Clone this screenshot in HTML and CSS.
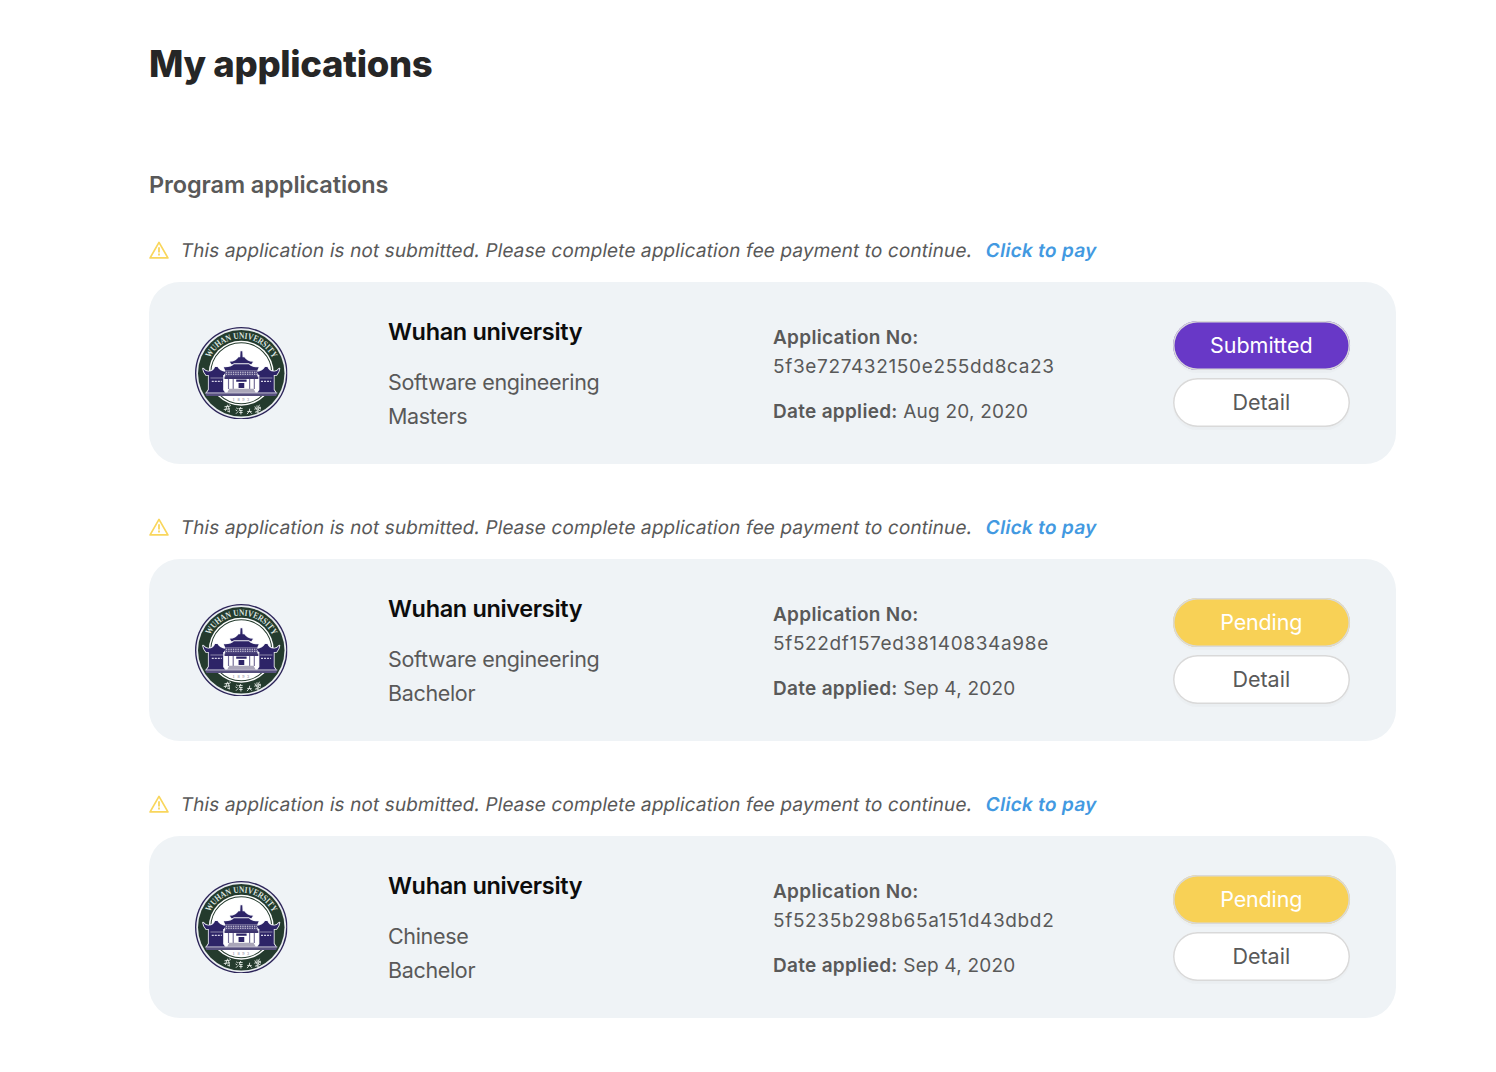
FILE: index.html
```html
<!DOCTYPE html>
<html lang="en">
<head>
<meta charset="utf-8">
<title>My applications</title>
<link rel="stylesheet" href="styles.css">
</head>
<body>
<svg class="defs" width="0" height="0" aria-hidden="true">
  <symbol id="warning" viewBox="0 0 20 18">
    <path d="M10 1.400 18.900 16.900H1.100Z" fill="none" stroke="#f9d65c" stroke-width="1.700" stroke-linejoin="round"/>
    <path d="M10 6.200v5.200M10 12.600v2" fill="none" stroke="#f9d65c" stroke-width="1.800"/>
  </symbol>
  <symbol id="emblem" viewBox="-138 -138 276 276">
    <circle r="138" fill="#2b2358"/>
    <circle r="134" fill="#e9edf0"/>
    <circle r="129" fill="#243b2d"/>
    <circle r="97" fill="#fff"/>
    <circle r="91" fill="none" stroke="#243b2d" stroke-width="3"/>
    <path d="M-92 8H92V66H-92Z" fill="#fff"/>
    <g fill="#2d2467" stroke="#f3f4f8" stroke-width="5" paint-order="stroke" stroke-linejoin="round">
      <path d="M-2-66h5l1 18h-7zM-8-48H9q8 12 26 14l-5 7H-29l-5-7Q-16-36-8-48Z"/>
      <path d="M-22-27H23q8 10 29 9l-4 9H-48l-4-9Q-30-17-22-27Z"/>
      <path d="M-114-14Q-106-4-97-5-82-7-78-19h7Q-65-7-46-4l-6 9h-2V50l6 8H-103l6-9V5h-8q-8-9-9-19Z"/>
      <path d="M114-14Q106-4 97-5 82-7 78-19h-7Q65-7 46-4l6 9h2V50l-6 8H103l-6-9V5h8q8-9 9-19Z"/>
    </g>
    <path d="M-48-9H48V13H-48Z" fill="#4b437c"/>
    <path d="M-46-3H47M-46 3H47" stroke="#dedbe8" stroke-width="3" stroke-dasharray="4 3"/>
    <path d="M-50 10H51V17H-50Z" fill="#3d346e"/>
    <path d="M-38 17v30M-24 17v30M25 17v30M39 17v30" stroke="#746d98" stroke-width="3.500"/>
    <path d="M-15 19H16V25H-15ZM-8 29H9V44H-8Z" fill="#2d2467"/>
    <path d="M-36 46H37l6 12H-42Z" fill="#aaa6b9"/>
    <path d="M-92 14H-54M55 14H93" stroke="#8c86aa" stroke-width="3"/>
    <path d="M-88 24H-58M59 24H89" stroke="#d7d4e6" stroke-width="3.500" stroke-dasharray="6 3"/>
    <path d="M-108 58H108L104 68H-104Z" fill="#57507f"/>
    <path d="M-108 59H108" stroke="#dad8e4" stroke-width="2"/>
    <text class="emblem-year" x="3" y="84" text-anchor="middle">1893</text>
    <path id="emblem-arc" d="M-93-45A103.300 103.300 0 0 1 96.500-37" fill="none"/>
    <text class="emblem-name"><textPath href="#emblem-arc" textLength="232" lengthAdjust="spacingAndGlyphs">WUHAN UNIVERSITY</textPath></text>
    <g fill="none" stroke="#eef1ee" stroke-width="2.600" stroke-linecap="round">
      <path d="M-49 100l15-2M-41 95l-6 16M-51 108l16-2M-38 99l3 17-6-3M-34 94l2 2"/>
      <path d="M-14 104l3 2M-16 110l3 2M-15 120l5-5M-7 105h10M-2 102l-4 9h9M-5 117h8M-1 111v11"/>
      <path d="M19 114h11M25 107l-1 7-6 7M25 114l6 6"/>
      <path d="M41 100l2 4M47 97v5M54 95l-3 6M40 107l17-6v5M45 109l9-4-5 6 2 8-4-1M42 116l15-6"/>
    </g>
  </symbol>
</svg>

<main class="page">
  <h1 class="title">My applications</h1>
  <h2 class="subtitle">Program applications</h2>

  <section class="application">
    <p class="notice"><svg class="notice-icon"><use href="#warning"/></svg><span class="slanted">This application is not submitted. Please complete application fee payment to continue.</span><a class="slanted pay">Click to pay</a></p>
    <article class="card">
      <svg class="emblem"><use href="#emblem"/></svg>
      <div class="program">
        <h3 class="school">Wuhan university</h3>
        <p class="line">Software engineering</p>
        <p class="line">Masters</p>
      </div>
      <div class="meta">
        <p class="meta-row"><b class="label">Application No:</b><br><span class="code">5f3e727432150e255dd8ca23</span></p>
        <p class="meta-row"><b class="label">Date applied:</b> Aug 20, 2020</p>
      </div>
      <div class="actions">
        <button class="btn btn-submitted">Submitted</button>
        <button class="btn">Detail</button>
      </div>
    </article>
  </section>

  <section class="application">
    <p class="notice"><svg class="notice-icon"><use href="#warning"/></svg><span class="slanted">This application is not submitted. Please complete application fee payment to continue.</span><a class="slanted pay">Click to pay</a></p>
    <article class="card">
      <svg class="emblem"><use href="#emblem"/></svg>
      <div class="program">
        <h3 class="school">Wuhan university</h3>
        <p class="line">Software engineering</p>
        <p class="line">Bachelor</p>
      </div>
      <div class="meta">
        <p class="meta-row"><b class="label">Application No:</b><br><span class="code">5f522df157ed38140834a98e</span></p>
        <p class="meta-row"><b class="label">Date applied:</b> Sep 4, 2020</p>
      </div>
      <div class="actions">
        <button class="btn btn-pending">Pending</button>
        <button class="btn">Detail</button>
      </div>
    </article>
  </section>

  <section class="application">
    <p class="notice"><svg class="notice-icon"><use href="#warning"/></svg><span class="slanted">This application is not submitted. Please complete application fee payment to continue.</span><a class="slanted pay">Click to pay</a></p>
    <article class="card">
      <svg class="emblem"><use href="#emblem"/></svg>
      <div class="program">
        <h3 class="school">Wuhan university</h3>
        <p class="line">Chinese</p>
        <p class="line">Bachelor</p>
      </div>
      <div class="meta">
        <p class="meta-row"><b class="label">Application No:</b><br><span class="code">5f5235b298b65a151d43dbd2</span></p>
        <p class="meta-row"><b class="label">Date applied:</b> Sep 4, 2020</p>
      </div>
      <div class="actions">
        <button class="btn btn-pending">Pending</button>
        <button class="btn">Detail</button>
      </div>
    </article>
  </section>
</main>
</body>
</html>
```
FILE: styles.css
```css
* { box-sizing: border-box; margin: 0; padding: 0; }

body {
  background: #fff;
  color: #595959;
  font-family: Inter, "Liberation Sans", sans-serif;
}

.defs { display: block; }

.page { width: 1247px; margin-left: 149px; padding-top: 40px; }

.title {
  color: #262626;
  font-size: 36.5px;
  font-weight: 800;
  letter-spacing: -.36px;
  line-height: 48px;
}

.subtitle {
  margin-top: 81px;
  font-size: 23.5px;
  font-weight: 600;
  letter-spacing: -.1px;
  line-height: 32px;
}

.application { height: 277.1px; }
.subtitle + .application { margin-top: 33.5px; }

.notice {
  display: flex;
  align-items: center;
  height: 32px;
  font-size: 19px;
  letter-spacing: .113px;
}

/* Slanted upright letterforms, so that a and f keep their roman shapes */
.slanted { display: block; transform: skewX(-10deg); white-space: nowrap; }

.notice-icon { width: 20px; height: 18px; margin: 0 12px 1px 0; }
.pay { margin-left: 13.5px; color: #4299e1; font-weight: 600; letter-spacing: .3px; }

.card {
  display: grid;
  grid-template-columns: 193px 385px 400px 176.5px;
  height: 181.5px;
  margin-top: 15.5px;
  padding: 0 46px;
  border-radius: 31px;
  background: #eff3f6;
}

.emblem { width: 92.5px; height: 92.5px; margin-top: 44.5px; }
.emblem-name { fill: #dfe6e1; font: bold 27px "Liberation Serif", serif; }
.emblem-year { fill: #77758f; font: 13px "Liberation Serif", serif; letter-spacing: 8px; }

.program { padding-top: 34.3px; }
.school { margin-bottom: 16.5px; color: #0c0c0c; font-size: 23.5px; font-weight: 600; letter-spacing: -.35px; line-height: 32px; }
.line { font-size: 21.5px; letter-spacing: -.34px; line-height: 34px; }

.meta { padding-top: 40.5px; font-size: 19px; letter-spacing: .22px; line-height: 29.4px; }
.meta-row + .meta-row { margin-top: 15.3px; }
.label { font-weight: 600; letter-spacing: .29px; }
.code { letter-spacing: .65px; }

.actions { display: flex; flex-direction: column; gap: 8px; padding-top: 39px; }

.btn {
  height: 49px;
  padding-bottom: 2px;
  border: 0;
  border-radius: 25px;
  background: #fff;
  box-shadow: inset 0 0 0 1.5px #d9d9d9, 0 3px 1px rgba(0, 0, 0, .02);
  color: #595959;
  font: 21.5px Inter, "Liberation Sans", sans-serif;
}

.btn-submitted { background: #6838c7; color: #fff; }
.btn-pending { background: #f8d156; color: #fff; letter-spacing: -.15px; }
```
